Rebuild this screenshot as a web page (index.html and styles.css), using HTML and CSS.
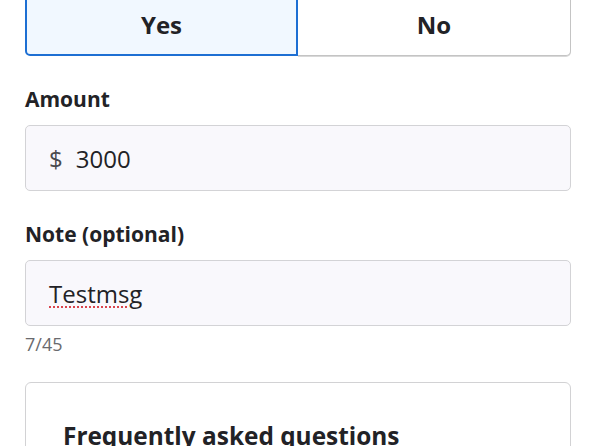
FILE: index.html
```html
<!DOCTYPE html>
<html lang="en">
<head>
<meta charset="utf-8">
<title>Form</title>
<link rel="stylesheet" href="styles.css">
</head>
<body>
<main class="page">
  <div class="segmented">
    <div class="seg seg-active">Yes</div>
    <div class="seg">No</div>
  </div>

  <div class="field field-amount">
    <div class="label">Amount</div>
    <div class="input"><span class="prefix">$</span><span class="value">3000</span></div>
  </div>

  <div class="field field-note">
    <div class="label">Note (optional)</div>
    <div class="input"><span class="value misspelled">Testmsg</span></div>
    <div class="counter">7/45</div>
  </div>

  <section class="card">
    <h2 class="card-title">Frequently asked questions</h2>
  </section>
</main>
</body>
</html>
```
FILE: styles.css
```css
* { box-sizing: border-box; }
html, body { margin: 0; padding: 0; background: #ffffff; }
body {
  font-family: "Open Sans", "Noto Sans", sans-serif;
  color: #222226;
  overflow: hidden;
}
.page {
  padding: 0 25px;
}
.segmented {
  display: grid;
  grid-template-columns: 273px 273px;
  height: 64px;
  margin-top: -8px;
}
.seg {
  display: flex;
  align-items: center;
  justify-content: center;
  font-size: 24px;
  font-weight: 700;
  color: #222226;
  background: #ffffff;
  border: 1px solid #c4c4c4;
  border-left: none;
  border-radius: 0 5px 5px 0;
  box-shadow: 0 1px 0 #d8d8d8;
}
.seg-active {
  background: #f1f8ff;
  border: 2px solid #1d6fd3;
  border-radius: 5px 0 0 5px;
  box-shadow: none;
}
.field-amount { margin-top: 29px; }
.field-note { margin-top: 29px; }
.label {
  font-size: 21px;
  font-weight: 700;
  line-height: 28px;
  color: #222226;
}
.input {
  margin-top: 12px;
  height: 66px;
  display: flex;
  align-items: center;
  padding: 0 23px;
  background: #f9f8fc;
  border: 1px solid #d3d3d6;
  border-radius: 5px;
  font-size: 24px;
}
.prefix {
  color: #4a4a4e;
  margin-right: 13px;
}
.value { color: #222226; }
.misspelled {
  text-decoration-line: underline;
  text-decoration-style: dotted;
  text-decoration-color: #d9454d;
  text-decoration-thickness: 2px;
  text-underline-offset: 4px;
}
.counter {
  margin-top: 6px;
  font-size: 18px;
  line-height: 24px;
  color: #6a6a6e;
}
.card {
  margin-top: 26px;
  border: 1px solid #d2d2d4;
  border-radius: 6px;
  padding: 37px;
  min-height: 120px;
}
.card-title {
  margin: 0;
  font-size: 24.4px;
  line-height: 32px;
  font-weight: 700;
  color: #222226;
}
```
